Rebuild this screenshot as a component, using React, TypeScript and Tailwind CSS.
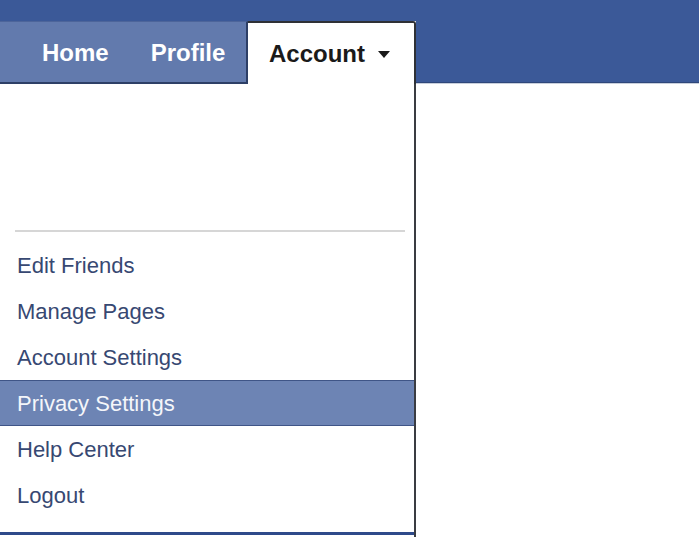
import React from "react";

const items = [
  "Edit Friends",
  "Manage Pages",
  "Account Settings",
  "Privacy Settings",
  "Help Center",
  "Logout",
];

export default function App() {
  return (
    <div
      className="flex h-[537px] w-[699px] overflow-hidden bg-white"
      style={{ fontFamily: '"Liberation Sans", Arial, sans-serif' }}
    >
      {/* left column: tab bar + open dropdown */}
      <div className="flex w-[416px] flex-col">
        <div className="h-[21px] bg-[#3b5998]" />
        <div className="flex h-[63px]">
          <div className="flex w-[248px] items-center border-t border-r-2 border-b-2 border-t-[#4d659a] border-r-[#2d3f66] border-b-[#2d3f66] bg-[#627aad] pt-[1px] pl-[42px] text-[24px] font-bold text-white">
            <span>Home</span>
            <span className="ml-[42px]">Profile</span>
          </div>
          <div className="flex flex-1 items-center rounded-tr-[3px] border-t-2 border-r-2 border-[#2f3136] bg-white pt-[1px] pl-[21px] text-[24px] font-bold text-[#1a1a1a]">
            <span>Account</span>
            <svg width="12" height="7" viewBox="0 0 12 7" className="ml-[13px] mt-[1px]">
              <path d="M0 0 L12 0 L6 7 Z" fill="#1a1a1a" />
            </svg>
          </div>
        </div>
        <div className="flex flex-1 flex-col border-r-2 border-[#3a3c42] bg-white">
          <div className="h-[146px]" />
          <div className="ml-[15px] mr-[9px] h-[2px] bg-[#d6d6d6]" />
          <div className="mt-[10px] flex flex-col">
            {items.map((label) => {
              const active = label === "Privacy Settings";
              return (
                <div
                  key={label}
                  className={
                    active
                      ? "flex h-[46px] items-center border-y border-[#3f5587] bg-[#6d84b4] pl-[17px] text-[22px] text-[#f4f6fa]"
                      : "flex h-[46px] items-center pl-[17px] text-[22px] text-[#374872]"
                  }
                >
                  {label}
                </div>
              );
            })}
          </div>
          <div className="flex-1" />
          <div className="h-[3px] bg-[#2e4a8a]" />
          <div className="h-[2px] bg-white" />
        </div>
      </div>
      {/* right column: header continues, page body */}
      <div className="flex flex-1 flex-col">
        <div className="h-[83px] border-b border-[#2f477a] bg-[#3b5998]" />
        <div className="h-px bg-[#c8cfdc]" />
        <div className="flex-1 bg-white" />
      </div>
    </div>
  );
}
